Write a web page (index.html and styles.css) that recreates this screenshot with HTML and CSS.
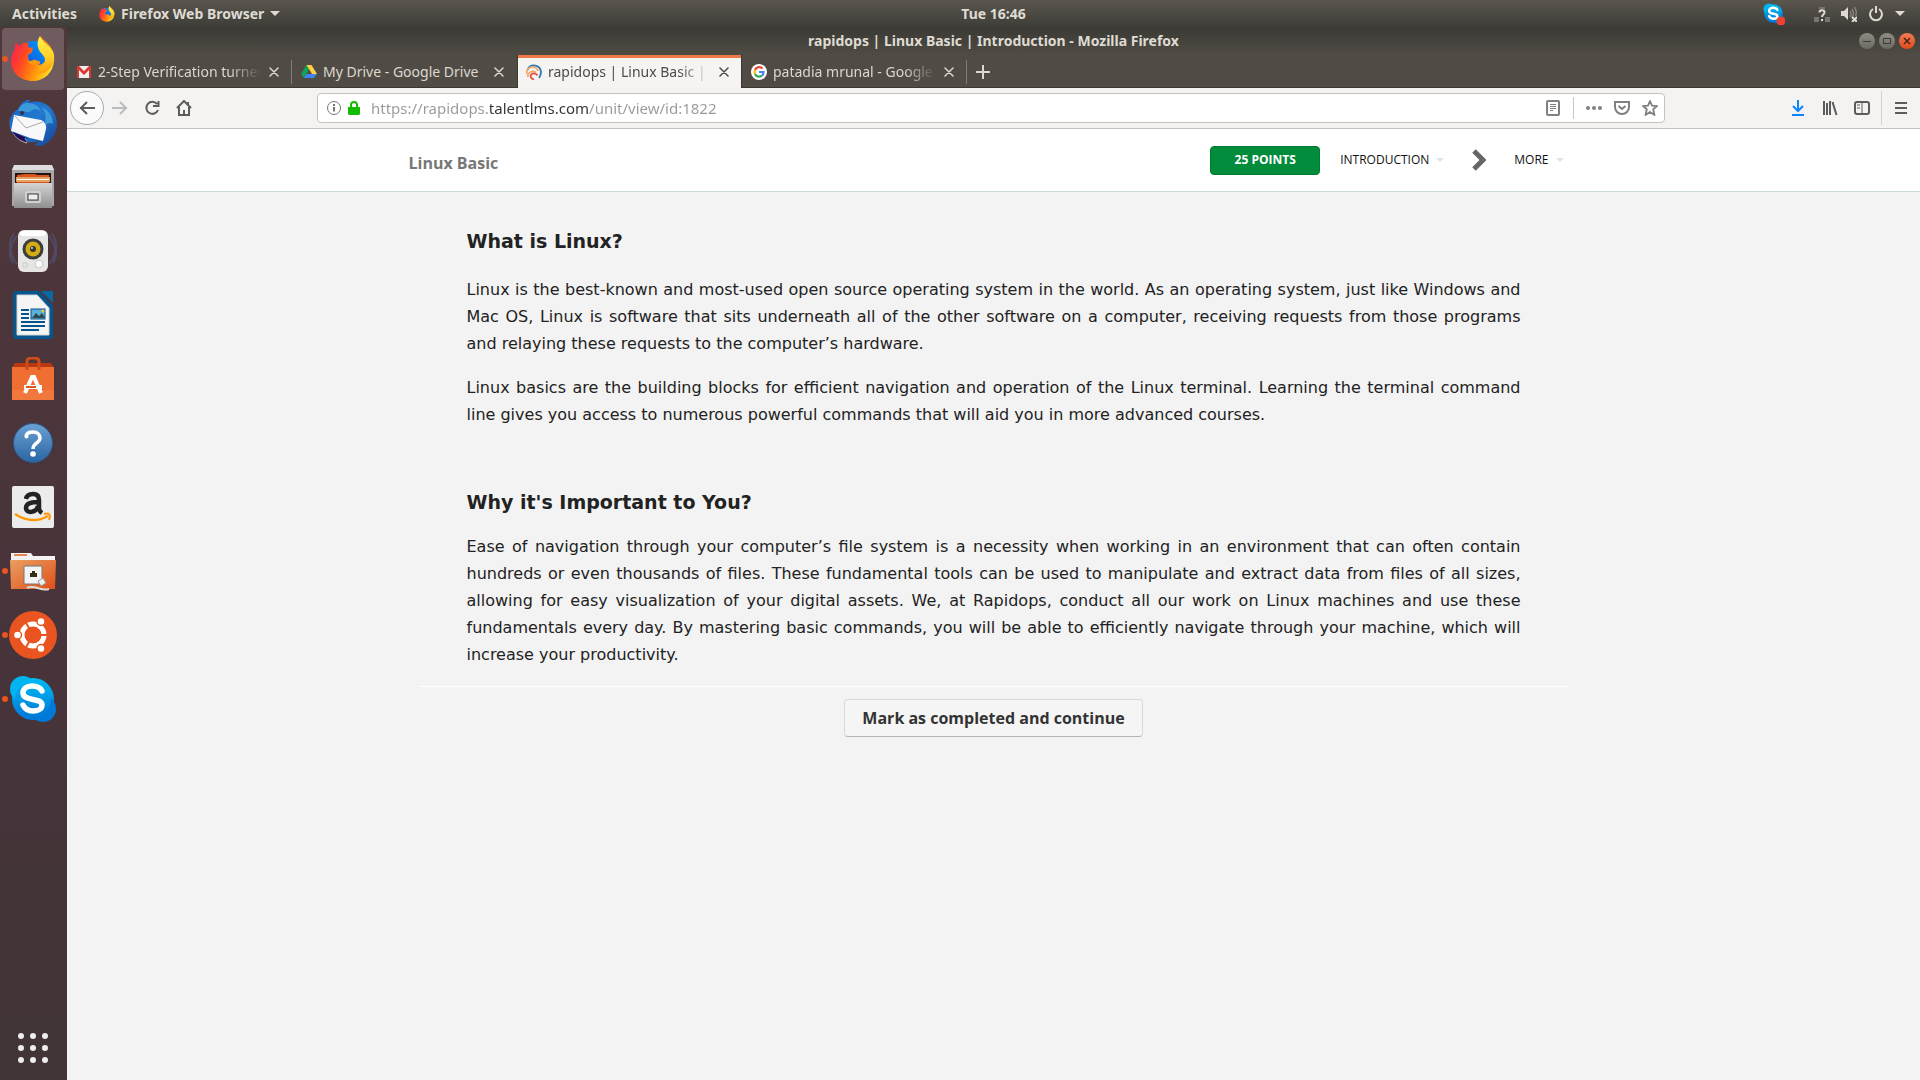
FILE: index.html
```html
<!DOCTYPE html>
<html lang="en">
<head>
<meta charset="utf-8">
<title>rapidops | Linux Basic | Introduction</title>
<link rel="stylesheet" href="styles.css">
</head>
<body>
<svg class="defs" aria-hidden="true">
  <defs>
    <linearGradient id="fox" x1="0" y1=".2" x2="1" y2=".6"><stop offset="0" stop-color="#ff1a57"/><stop offset=".35" stop-color="#ff4a22"/><stop offset=".7" stop-color="#ff9a0a"/><stop offset="1" stop-color="#ffe226"/></linearGradient>
    <linearGradient id="foxtail" x1="0" y1="0" x2="0" y2="1"><stop offset="0" stop-color="#fff44f"/><stop offset=".5" stop-color="#ffd52a"/><stop offset="1" stop-color="#ff980e"/></linearGradient>
    <linearGradient id="globe" x1="1" y1="0" x2="0" y2="1"><stop offset="0" stop-color="#00a6ff"/><stop offset=".5" stop-color="#0a6ee8"/><stop offset="1" stop-color="#3a2483"/></linearGradient>
    <linearGradient id="bird" x1="0" y1="0" x2="1" y2="1"><stop offset="0" stop-color="#1b62c4"/><stop offset=".5" stop-color="#2279cf"/><stop offset="1" stop-color="#163f93"/></linearGradient>
    <linearGradient id="metal" x1="0" y1="0" x2="0" y2="1"><stop offset="0" stop-color="#d4d4d4"/><stop offset="1" stop-color="#8f8f8f"/></linearGradient>
    <linearGradient id="orange" x1="0" y1="0" x2="1" y2="1"><stop offset="0" stop-color="#e9a062"/><stop offset="1" stop-color="#e04f18"/></linearGradient>
    <linearGradient id="help" x1="0" y1="0" x2="0" y2="1"><stop offset="0" stop-color="#6ba0d2"/><stop offset="1" stop-color="#2a66a5"/></linearGradient>
    <linearGradient id="sky" x1="0" y1="0" x2="0" y2="1"><stop offset="0" stop-color="#00b9f2"/><stop offset="1" stop-color="#0078d7"/></linearGradient>
    <symbol id="firefox" viewBox="0 0 44 46">
      <circle cx="23" cy="22" r="17" fill="url(#globe)"/>
      <path d="M5 6c1 2 2 3 3 4 3-3 6-4 10-3-1 2-1 3-1 4 2 1 5 0 5 1l-1 4c-1 2-4 2-4 4 0 3 1 5 3 6 3 1 5-2 8-1 2 1 1 3-1 4 4 0 8-3 8-8 0-6-8-9-8-14 0-3 2-5 3-7 1 3 6 6 8 9 4 5 6 9 5 16-1 12-10 20-21 20C9 45 0 36 0 25c0-5 2-9 4-12 0-3 0-5 1-7Z" fill="url(#fox)"/>
      <path d="M29 0c-3 5-3 9-1 14 2 4 7 6 6 13-1 6-5 9-9 11 10 0 18-6 18-16 0-11-11-14-14-22Z" fill="url(#foxtail)"/>
      <path d="M17 25c3 1 5-2 8-1 2 1 1 4-2 5-3 0-5-1-6-4Z" fill="#ff970d"/>
    </symbol>
    <symbol id="x" viewBox="0 0 10 10"><path d="M1 1l8 8M9 1l-8 8" fill="none" stroke="currentColor" stroke-width="1.5" stroke-linecap="round"/></symbol>
    <symbol id="skype" viewBox="0 0 48 48">
      <circle cx="24" cy="24" r="21" fill="url(#sky)"/><circle cx="14" cy="14" r="13" fill="#00b5f0"/><circle cx="34" cy="34" r="13" fill="#0079d8"/><circle cx="24" cy="24" r="18" fill="url(#sky)"/>
      <path d="M33 16c-2-4-6-5-10-5-6 0-9 3-9 7 0 9 19 4 19 12 0 4-4 6-9 6s-8-2-10-6" fill="none" stroke="#fff" stroke-width="5.5" stroke-linecap="round"/>
    </symbol>
  </defs>
</svg>

<header class="topbar">
  <div class="topbar-left">
    <button class="bar-btn">Activities</button>
    <button class="bar-btn app-menu"><svg width="16" height="16"><use href="#firefox"/></svg>Firefox Web Browser<i class="caret"></i></button>
  </div>
  <button class="bar-btn clock">Tue 16:46</button>
  <div class="topbar-right">
    <svg class="tray-skype" width="22" height="22" viewBox="0 0 22 22"><use href="#skype" width="21" height="21"/><circle cx="18" cy="18" r="4.500" fill="#f0402f"/></svg>
    <svg width="16" height="16" viewBox="0 0 16 16"><path d="M5 1h6v2H5zM0 11h5v5H0zM11 11h5v5h-5z" fill="#77756f"/><path d="M5.500 6.500c0-3 5-3 5 0 0 2-2.500 2-2.500 4.500M8 13v2" fill="none" stroke="#dfdbd2" stroke-width="2"/></svg>
    <svg width="16" height="16" viewBox="0 0 16 16"><path d="M0 5h3l4-4v13l-4-4H0z" fill="#dfdbd2"/><path d="M9 5q2 3 0 6M11 3q3 5 0 8M13.500 1q3 5 1 9" fill="none" stroke="#85827b" stroke-width="1.500"/><path d="M11 11l5 5M16 11l-5 5" stroke="#dfdbd2" stroke-width="2"/></svg>
    <svg width="16" height="16" viewBox="0 0 16 16"><path d="M5 3a6 6 0 1 0 6 0M8 0v7" fill="none" stroke="#dfdbd2" stroke-width="2"/></svg>
    <i class="caret"></i>
  </div>
</header>

<div class="desktop">
  <nav class="dock" aria-label="Dock">
    <a href="#" class="dock-item running current" aria-label="Firefox"><svg width="44" height="46"><use href="#firefox"/></svg></a>
    <a href="#" class="dock-item" aria-label="Thunderbird"><svg width="48" height="48" viewBox="0 0 48 48">
      <path d="M9 10C12 4 17 0 21 1l-2 3C32-1 47 8 48 24c0 12-7 20-16 23l-7-1 6-4C19 46 5 41 1 29-1 20 3 14 9 10Z" fill="url(#bird)"/>
      <path d="M20 4c-6-1-10 4-11 8 5-1 10 3 13 0 4-4 10 0 10 0s-2-7-12-8ZM32 8c8 3 12 10 12 17-3-2-6-1-8 2 0-8 3-12-4-19Z" fill="#3a9bd8"/>
      <path d="M32 21L5 16l-3 16c6 2 12 4 19 7l13 3 3-12c1-4-2-8-5-9Z" fill="#f8f8f8"/><path d="M6 17l11 12 17-6M5 35c3 5 8 8 13 9l-2-5" fill="none" stroke="#aaa"/><path d="M4 33c3 6 9 9 14 10l-3-4 5 1Z" fill="#25094f"/><circle cx="13" cy="14" r="2" fill="#334"/>
    </svg></a>
    <a href="#" class="dock-item" aria-label="Files"><svg width="44" height="44" viewBox="0 0 44 44">
      <path d="M1 5l2-4h38l2 4v36H1Z" fill="#a8a8a8"/><path d="M3 0h38l2 5H1Z" fill="#dedede"/><path d="M4 8h36v10H4Z" fill="#201510"/><path d="M6 10l8-1h10l2 1h12v8H6Z" fill="#d65520"/><path d="M5 12h34v5H5Z" fill="#e4a05c"/><path d="M6 14h32v1H6Z" fill="#fff"/><path d="M3 18h38v25H3Z" fill="url(#metal)"/><rect x="15" y="27" width="14" height="10" rx="1" fill="none" stroke="#d0d0d0" stroke-width="2"/><rect x="17" y="29" width="10" height="6" fill="#eee" stroke="#444"/>
    </svg></a>
    <a href="#" class="dock-item" aria-label="Rhythmbox"><svg width="48" height="44" viewBox="0 0 48 44">
      <path d="M8 7Q-4 21 8 35M5 4Q-4 20 4 34M40 7q12 14 0 28M43 4q9 16 1 30" fill="none" stroke="#4f4a62" stroke-width="2"/><rect x="9" y="1" width="30" height="42" rx="6" fill="#e6e6e4"/><rect x="11" y="2" width="26" height="5" rx="3" fill="#fff"/><circle cx="24" cy="20" r="10.500" fill="#3d3d3d"/><circle cx="24" cy="20" r="7.500" fill="#d2ac13"/><circle cx="24" cy="20" r="3" fill="#343434"/><circle cx="23" cy="19" r="1" fill="#ddd"/><circle cx="30" cy="35" r="4" fill="#fafafa" stroke="#c7c7c7"/><path d="M14 34h4v4h-4z" fill="none" stroke="#ccc"/>
    </svg></a>
    <a href="#" class="dock-item" aria-label="LibreOffice Writer"><svg width="40" height="48" viewBox="0 0 40 48">
      <path d="M2 0h24l14 15v31l-2 2H2l-2-2V2Z" fill="#06558d"/><path d="M28 0h12v12Z" fill="#0a69a5"/><path d="M4 4h20l12 13v27H4Z" fill="#f5f5f5" stroke="#cfd3d5"/><path d="M8 19h8M8 23h8M8 27h8M8 31h24M8 35h24M8 39h18" stroke="#06558d" stroke-width="2"/><rect x="18" y="18" width="14" height="10" fill="#5ab0db" stroke="#06558d"/><path d="M19 27l4-5 3 3 3-3 3 5Z" fill="#31484d"/><circle cx="30" cy="20" r="1.500" fill="#f4c732"/>
    </svg></a>
    <a href="#" class="dock-item" aria-label="Ubuntu Software"><svg width="42" height="44" viewBox="0 0 42 44">
      <path d="M3 6h36l3 5H0Z" fill="#b9380d"/><path d="M0 10h42v33H0Z" fill="#ee6f31"/><path d="M0 33h42v10H0Z" fill="#f0783d"/><path d="M15 13V5q0-4 4-4h4q4 0 4 4v8" fill="none" stroke="#d04a18" stroke-width="3"/><path d="M13 36l7-16h2l7 16M12 30h18" fill="none" stroke="#fff" stroke-width="4"/><path d="M14 30h10" stroke="#e05a20" stroke-width="2"/>
    </svg></a>
    <a href="#" class="dock-item" aria-label="Help"><svg width="40" height="40" viewBox="0 0 40 40"><circle cx="20" cy="20" r="19.500" fill="url(#help)" stroke="#2b5a8c"/><path d="M13 13q1-4 7-4c5 0 7 3 7 6 0 5-7 5-7 11" fill="none" stroke="#fff" stroke-width="3.500"/><circle cx="13.500" cy="13.500" r="2" fill="#fff"/><circle cx="20" cy="31" r="2.800" fill="#fff"/></svg></a>
    <a href="#" class="dock-item" aria-label="Amazon"><svg width="42" height="42" viewBox="0 0 42 42"><rect width="42" height="42" rx="2" fill="#ececec"/><path d="M14 13q1-5 7-5 6 0 6 6v8q0 3 3 5M26 16c-7 0-12 1-12 6 0 6 10 5 12-2" fill="none" stroke="#222" stroke-width="4.500"/><path d="M3 28q17 11 33 2" fill="none" stroke="#f90" stroke-width="2.500"/><path d="M32 28q8-2 5 6" fill="none" stroke="#f90" stroke-width="2"/></svg></a>
    <a href="#" class="dock-item running" aria-label="Remote folder"><svg width="46" height="40" viewBox="0 0 46 40"><path d="M1 2h20l2 3h22v8H1Z" fill="#f3f3f3"/><path d="M4 3h13v2H4Z" fill="#e98552"/><path d="M0 9h46l-1 29H1Z" fill="url(#orange)"/><rect x="14" y="15" width="18" height="18" rx="1" fill="#f3f3f3" stroke="#777"/><path d="M20 26v-4h2v-2h3v2h2v4Z" fill="#332f12"/><path d="M17 37c8-4 14 4 22 1" fill="none" stroke="#ddd" stroke-width="2"/><path d="M28 30l5-3 3 5-5 3Z" fill="#eee" stroke="#999"/></svg></a>
    <a href="#" class="dock-item running" aria-label="Ubuntu"><svg width="48" height="48" viewBox="0 0 48 48"><circle cx="24" cy="24" r="24" fill="#e95420"/><circle cx="24" cy="24" r="11" fill="none" stroke="#fff" stroke-width="5"/><path d="M24 24h16M24 24l-8-14M24 24l-8 14" stroke="#e95420" stroke-width="2"/><circle cx="24" cy="24" r="8" fill="#e95420"/><g fill="#fff" stroke="#e95420" stroke-width="1.500"><circle cx="8.500" cy="24" r="4"/><circle cx="32" cy="10.500" r="4"/><circle cx="32" cy="37.500" r="4"/></g></svg></a>
    <a href="#" class="dock-item running" aria-label="Skype"><svg width="48" height="48"><use href="#skype"/></svg></a>
    <button class="apps" aria-label="Show Applications"><svg width="30" height="30" viewBox="0 0 30 30" fill="#eee"><circle cx="3" cy="3" r="3"/><circle cx="15" cy="3" r="3"/><circle cx="27" cy="3" r="3"/><circle cx="3" cy="15" r="3"/><circle cx="15" cy="15" r="3"/><circle cx="27" cy="15" r="3"/><circle cx="3" cy="27" r="3"/><circle cx="15" cy="27" r="3"/><circle cx="27" cy="27" r="3"/></svg></button>
  </nav>

  <div class="window">
    <div class="titlebar">
      <span class="window-title">rapidops | Linux Basic | Introduction - Mozilla Firefox</span>
      <div class="window-controls">
        <button aria-label="Minimize"><svg width="16" height="16"><path d="M4 8.500h8" stroke="#3a3935"/></svg></button>
        <button aria-label="Maximize"><svg width="16" height="16"><path d="M4.500 5.500h7v5h-7z" fill="none" stroke="#3a3935"/></svg></button>
        <button class="close" aria-label="Close"><svg width="16" height="16"><path d="M5 5l6 6M11 5l-6 6" stroke="#4a2415" stroke-width="1.500"/></svg></button>
      </div>
    </div>

    <div class="tabs" role="tablist">
      <div class="tab" role="tab">
        <svg width="16" height="16" viewBox="0 0 16 16"><path d="M1 2h14v12H1z" fill="#eee"/><path d="M1 2h2l5 5 5-5h2v12h-2V6L8 11 3 6v8H1z" fill="#d93a2f"/></svg>
        <span class="tab-label">2-Step Verification turned on</span>
        <button class="tab-close" aria-label="Close tab"><svg width="10" height="10"><use href="#x"/></svg></button>
      </div>
      <div class="tab" role="tab">
        <svg width="16" height="16" viewBox="0 0 16 16"><path d="M5.500 1L8 5.500 3 14l-3-4z" fill="#11a45c"/><path d="M5.500 1h5L16 10h-5z" fill="#ffcf44"/><path d="M5.500 10H16l-3 4H3z" fill="#3f83f5"/></svg>
        <span class="tab-label">My Drive - Google Drive</span>
        <button class="tab-close" aria-label="Close tab"><svg width="10" height="10"><use href="#x"/></svg></button>
      </div>
      <div class="tab active" role="tab" aria-selected="true">
        <svg width="16" height="16" viewBox="0 0 16 16" fill="none" stroke-width="1.800"><path d="M1.500 6A7 7 0 0 1 15 8q0 3-2 6" stroke="#2878b8"/><path d="M1 10a5.500 5.500 0 0 1 11-3M2 13a5 4.500 0 0 1 8-4.500" stroke="#f6a96a"/><path d="M8 15.500c-6-2-3-8 2-5.500q1 .5 1.500 1.500" stroke="#e8533f"/></svg>
        <span class="tab-label">rapidops | Linux Basic | Introduction</span>
        <button class="tab-close" aria-label="Close tab"><svg width="10" height="10"><use href="#x"/></svg></button>
      </div>
      <div class="tab" role="tab">
        <svg width="16" height="16" viewBox="0 0 16 16"><circle cx="8" cy="8" r="8" fill="#fff"/><g fill="none" stroke-width="2.200"><path d="M4 6a4.500 4.500 0 0 1 7.500-1.500" stroke="#ea4335"/><path d="M4 6a4.500 4.500 0 0 0 0 4" stroke="#fbbc05"/><path d="M4 10a4.500 4.500 0 0 0 7 1.500" stroke="#34a853"/><path d="M8 8h4.500q0 2.500-1.500 3.500" stroke="#4285f4"/></g></svg>
        <span class="tab-label">patadia mrunal - Google Search</span>
        <button class="tab-close" aria-label="Close tab"><svg width="10" height="10"><use href="#x"/></svg></button>
      </div>
      <button class="new-tab" aria-label="New tab"><svg width="14" height="14"><path d="M7 0v14M0 7h14" stroke="currentColor" stroke-width="2"/></svg></button>
    </div>

    <div class="toolbar">
      <div class="nav-buttons">
        <button class="icon-btn back" aria-label="Back"><svg width="16" height="16" viewBox="0 0 16 16"><path d="M16 8H1M8 2L2 8l6 6"/></svg></button>
        <button class="icon-btn disabled" aria-label="Forward"><svg width="16" height="16" viewBox="0 0 16 16"><path d="M0 8h15M8 2l6 6-6 6"/></svg></button>
        <button class="icon-btn" aria-label="Reload"><svg width="16" height="16" viewBox="0 0 16 16"><path d="M13 4a6 6 0 1 0 1 6M9 6h5.500V1"/></svg></button>
        <button class="icon-btn" aria-label="Home"><svg width="16" height="16" viewBox="0 0 16 16"><path d="M1 8l7-7 7 7M3 7v8h10V7M8 15v-5M12 2v3"/></svg></button>
      </div>
      <div class="urlbar">
        <svg width="14" height="14" viewBox="0 0 14 14" fill="none" stroke="#777"><circle cx="7" cy="7" r="6.500"/><path d="M7 6v4.500M7 3v2" stroke-width="2"/></svg>
        <svg width="12" height="14" viewBox="0 0 12 14"><path d="M0 6h12v7l-1 1H1l-1-1z" fill="#12bc00"/><path d="M3 7V4q0-3 3-3t3 3v3" fill="none" stroke="#12bc00" stroke-width="2"/></svg>
        <input class="url" type="text" aria-label="Address" value="https://rapidops.talentlms.com/unit/view/id:1822">
        <svg class="reader" width="14" height="16" viewBox="0 0 14 16" fill="none" stroke="#808080"><rect x="1" y="1" width="12" height="14" rx="1" stroke-width="2"/><path d="M4 4.500h6M4 6.500h6M4 8.500h6M4 10.500h3"/></svg>
        <span class="url-actions">
          <svg width="16" height="16" viewBox="0 0 16 16" fill="#808080"><circle cx="2" cy="8" r="2"/><circle cx="8" cy="8" r="2"/><circle cx="14" cy="8" r="2"/></svg>
          <svg width="16" height="16" viewBox="0 0 16 16" fill="none" stroke="#808080" stroke-width="2"><path d="M1 2h14v5a7 7 0 0 1-14 0zM4.500 6L8 9l3.500-3"/></svg>
          <svg width="16" height="16" viewBox="0 0 16 16" fill="none" stroke="#808080" stroke-width="1.800" stroke-linejoin="round"><path d="M8 1l2 4.700 5 .3-3.800 3.300L12.500 15 8 12l-4.500 3 1.300-5.700L1 6l5-.3z"/></svg>
        </span>
      </div>
      <div class="tools">
        <button class="icon-btn blue" aria-label="Downloads"><svg width="16" height="16" viewBox="0 0 16 16"><path d="M8 0v11M3 6l5 5 5-5M2 15h12"/></svg></button>
        <button class="icon-btn" aria-label="Library"><svg width="16" height="16" viewBox="0 0 16 16"><path d="M2 1v14M5 3v12M8 1v14M10.500 2l4 13"/></svg></button>
        <button class="icon-btn" aria-label="Sidebars"><svg width="16" height="16" viewBox="0 0 16 16"><rect x="1" y="2" width="14" height="12" rx="2"/><path d="M8 2v12M3 5h3M3 8h3" stroke-width="1"/></svg></button>
        <button class="icon-btn menu" aria-label="Menu"><svg width="16" height="16" viewBox="0 0 16 16"><path d="M2 3h12M2 8h12M2 13h12"/></svg></button>
      </div>
    </div>

    <div class="page">
      <div class="site-header">
        <div class="container site-bar">
          <a href="#" class="course">Linux Basic</a>
          <nav class="site-nav">
            <button class="points">25 POINTS</button>
            <a href="#" class="nav-link">INTRODUCTION<i class="caret pale"></i></a>
            <a href="#" class="next" aria-label="Next unit"><svg width="14" height="22" viewBox="0 0 14 22"><path d="M2 2l9 9-9 9" fill="none" stroke="#666" stroke-width="5"/></svg></a>
            <a href="#" class="nav-link">MORE<i class="caret pale"></i></a>
          </nav>
        </div>
      </div>
      <main class="container content">
        <article class="unit">
          <h2>What is Linux?</h2>
          <p>Linux is the best-known and most-used open source operating system in the world. As an operating system, just like Windows and Mac OS, Linux is software that sits underneath all of the other software on a computer, receiving requests from those programs and relaying these requests to the computer’s hardware.</p>
          <p>Linux basics are the building blocks for efficient navigation and operation of the Linux terminal. Learning the terminal command line gives you access to numerous powerful commands that will aid you in more advanced courses.</p>
          <h2 class="second">Why it's Important to You?</h2>
          <p>Ease of navigation through your computer’s file system is a necessity when working in an environment that can often contain hundreds or even thousands of files. These fundamental tools can be used to manipulate and extract data from files of all sizes, allowing for easy visualization of your digital assets. We, at Rapidops, conduct all our work on Linux machines and use these fundamentals every day. By mastering basic commands, you will be able to efficiently navigate through your machine, which will increase your productivity.</p>
        </article>
        <div class="actions"><button class="complete">Mark as completed and continue</button></div>
      </main>
    </div>
  </div>
</div>
</body>
</html>
```
FILE: styles.css
```css
:root {
  --dock: 67px;
  --ui: "Noto Sans", sans-serif;
  --site: "Open Sans", "Noto Sans", sans-serif;
}
* { box-sizing: border-box; }
body {
  margin: 0;
  min-height: 100vh;
  display: flex;
  flex-direction: column;
  background: #f3f3f3;
  font: 14px/20px var(--ui);
}
button, input { font: inherit; color: inherit; border: 0; padding: 0; margin: 0; background: none; }
a { color: inherit; text-decoration: none; }
svg { display: block; flex: none; }
.defs { position: absolute; width: 0; height: 0; }

.caret {
  border: 5px solid transparent;
  border-top-color: #dfdbd2;
  border-bottom: 0;
}
.caret.pale { border-width: 4px; border-bottom: 0; border-top-color: #dde3e6; }

/* Desktop top bar */
.topbar {
  display: grid;
  grid-template-columns: var(--dock) 1fr auto 1fr;
  align-items: center;
  height: 27px;
  background: linear-gradient(#5a564e, #3e3d38);
  color: #dfdbd2;
  font-weight: 700;
}
.topbar-left { grid-column: 1 / 3; display: flex; gap: 22px; padding-left: 12px; }
.bar-btn { display: flex; align-items: center; gap: 6px; white-space: nowrap; }
.topbar-right { display: flex; justify-content: flex-end; align-items: center; gap: 11px; padding-right: 15px; }
.tray-skype { margin-right: 18px; }

.desktop { flex: 1; display: flex; }

/* Dock */
.dock {
  width: var(--dock);
  flex: none;
  display: flex;
  flex-direction: column;
  gap: 2px;
  padding: 1px 3px 17px 2px;
  background: linear-gradient(#51373b, #47343a 60%, #403436);
}
.dock-item {
  position: relative;
  display: grid;
  place-items: center;
  height: 62px;
  border-radius: 4px;
}
.current { background: #705b5f; }
.running::before {
  content: "";
  position: absolute;
  left: 0;
  top: 28px;
  width: 6px;
  height: 6px;
  border-radius: 50%;
  background: #e95420;
}
.apps { display: grid; place-items: center; margin-top: auto; }

/* Browser window */
.window { flex: 1; min-width: 0; display: flex; flex-direction: column; }
.titlebar {
  display: grid;
  grid-template-columns: 1fr auto 1fr;
  align-items: center;
  height: 28px;
  background: linear-gradient(#3a3934, #4f4c45);
  color: #dfdbd2;
}
.window-title { grid-column: 2; font-weight: 700; }
.window-controls { display: flex; justify-content: flex-end; gap: 4px; padding-right: 5px; }
.window-controls button {
  width: 16px;
  height: 16px;
  border-radius: 50%;
  background: linear-gradient(#8f8c84, #6b6962);
}
.window-controls .close { background: linear-gradient(#f27b55, #df4b19); }

.tabs { display: flex; height: 33px; background: #504c45; color: #dcd8cf; box-shadow: inset 0 -1px #393833; }
.tab {
  flex: 0 1 225px;
  min-width: 0;
  display: flex;
  align-items: center;
  gap: 6px;
  padding: 0 11px 0 9px;
  background: linear-gradient(#817d75, #817d75) right / 1px 24px no-repeat;
}
.tab:has(+ .active) { background: none; }
.tab-label {
  flex: 1;
  min-width: 0;
  overflow: hidden;
  white-space: nowrap;
  mask-image: linear-gradient(to left, transparent, #000 32px);
}
.tab:nth-child(2) .tab-label { mask-image: none; }
.tab-close { width: 14px; height: 20px; display: grid; place-items: center; }
.tab.active {
  background: #f5f4f2;
  color: #4c4c4c;
  border: solid #393833;
  border-width: 0 1px;
  padding: 0 10px 0 8px;
  box-shadow: inset 0 3px #f07746;
}
.new-tab { width: 32px; display: grid; place-items: center; }

.toolbar {
  display: flex;
  align-items: center;
  height: 41px;
  background: #f4f3f1;
  border-bottom: 1px solid #c4c1bc;
}
.nav-buttons { display: flex; align-items: center; width: 250px; padding-left: 3px; }
.icon-btn { width: 32px; height: 34px; display: grid; place-items: center; color: #5c5c5c; }
.icon-btn svg { fill: none; stroke: currentColor; stroke-width: 2; }
.icon-btn.back { width: 34px; border: 1px solid #aaa; border-radius: 50%; background: #fbfbfb; }
.icon-btn.disabled { color: #bbb; }
.icon-btn.blue { color: #0a84ff; }
.icon-btn.menu { width: 39px; margin-left: 3px; border-left: 1px solid #d4d2ce; }
.urlbar {
  flex: 1;
  min-width: 0;
  display: flex;
  align-items: center;
  gap: 7px;
  height: 30px;
  padding: 0 6px 0 9px;
  margin-right: 117px;
  border: 1px solid #c6c3be;
  border-radius: 4px;
  background: #fff;
}
.url {
  flex: 1;
  min-width: 0;
  margin-left: 4px;
  outline: 0;
  font-size: 15px;
  color: transparent;
  /* the host part of the address is darker than the rest */
  background: linear-gradient(to right, #999 119px, #333 119px 218px, #999 218px);
  background-clip: text;
  -webkit-background-clip: text;
}
.url-actions { display: flex; gap: 12px; margin-left: 6px; padding: 3px 0 3px 12px; border-left: 1px solid #c6c6c6; }
.tools { display: flex; }

/* Course page */
.page { flex: 1; background: #f3f3f3; font-family: var(--site); }
.site-header { background: #fff; border-bottom: 1px solid #cbd8dc; }
.container { width: 100%; max-width: 1170px; margin: 0 auto; }
.site-bar { display: flex; justify-content: space-between; align-items: center; height: 62px; padding-right: 15px; }
.course { font-size: 16px; font-weight: 700; color: #777; padding-top: 6px; }
.site-nav { display: flex; align-items: center; font-size: 12px; color: #111; }
.points {
  width: 110px;
  height: 29px;
  border: 1px solid #007a2f;
  border-radius: 4px;
  background: #008c3a;
  color: #fff;
  font-weight: 700;
}
.nav-link { display: flex; align-items: center; gap: 7px; }
.points + .nav-link { margin-left: 20px; }
.next { margin: 0 28px; }

.content { padding: 0 10px; }
.unit {
  padding: 32px 48px 18px;
  font: 16px/27px "DejaVu Sans", sans-serif;
  color: #222;
  text-align: justify;
  border-bottom: 1px solid #fff;
}
.unit h2 { margin: 0 0 18px; font-size: 19px; line-height: 34px; text-align: left; }
.unit p { margin: 0 0 17px; }
.unit .second { margin: 57px 0 14px; }
.unit p:last-child { margin: 0; }
.actions { display: flex; justify-content: center; padding: 12px 0; }
.complete {
  height: 38px;
  padding: 0 17px;
  border: 1px solid #d8d8d8;
  border-bottom-color: #b3b3b3;
  border-radius: 4px;
  background: #f5f5f5;
  color: #333;
  font-size: 16px;
  font-weight: 700;
}
```
